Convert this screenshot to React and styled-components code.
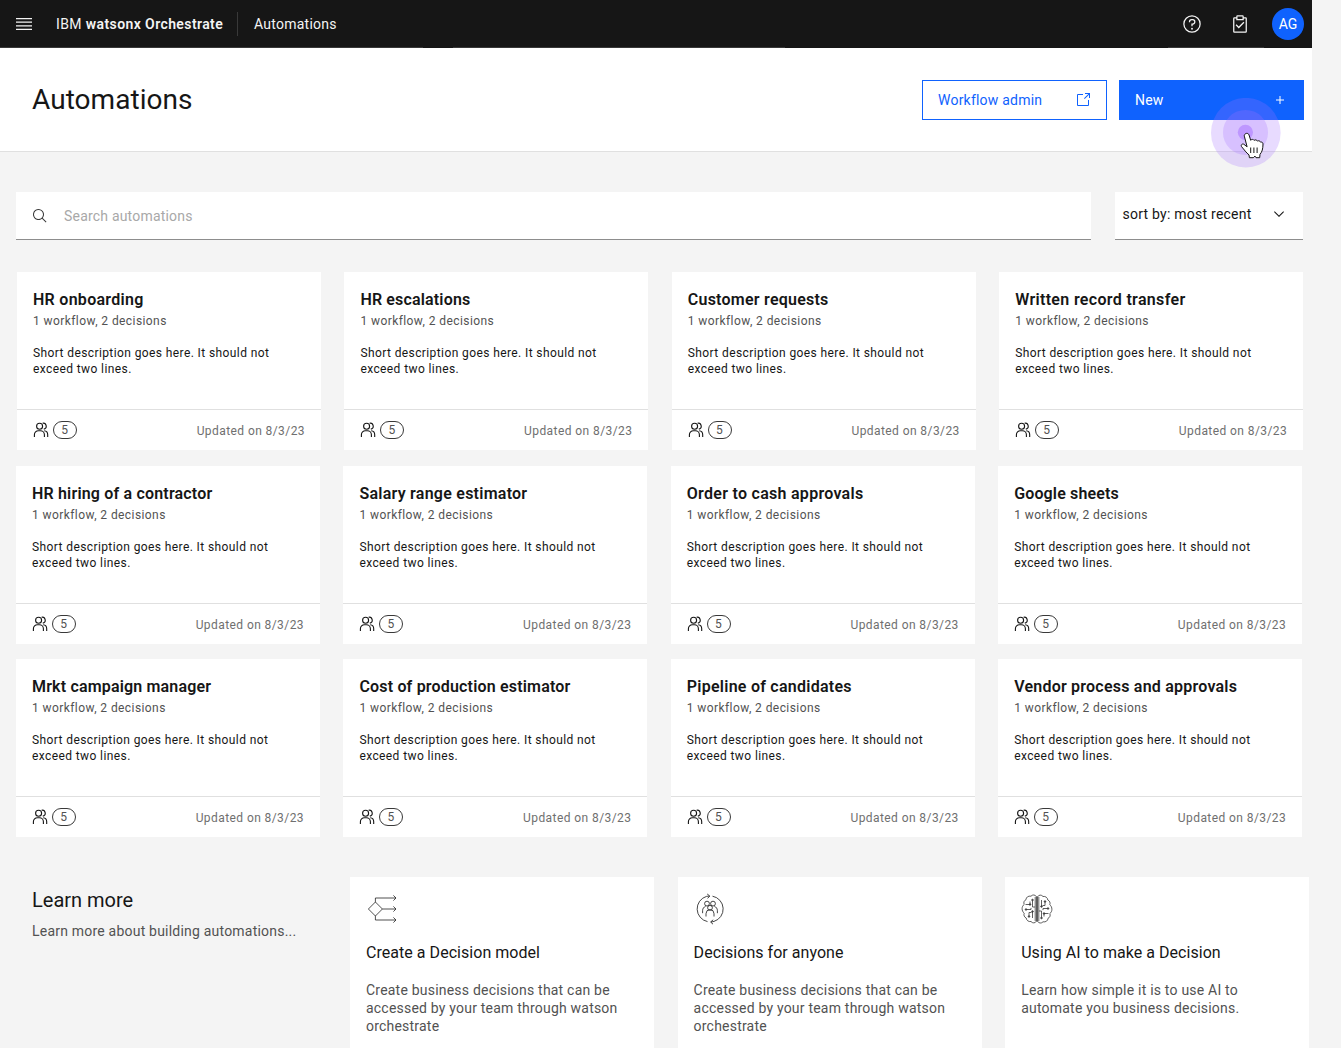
import React from "react";
import styled, { createGlobalStyle } from "styled-components";

const COLOR = {
  black: "#161616",
  blue: "#0f62fe",
  page: "#f4f4f4",
  line: "#e0e0e0",
  text: "#161616",
  gray: "#525252",
  light: "#6f6f6f",
};

const GlobalStyle = createGlobalStyle`
  * {
    box-sizing: border-box;
  }
  body {
    margin: 0;
    background: ${COLOR.page};
    color: ${COLOR.text};
    font-family: Roboto, "Liberation Sans", sans-serif;
    font-size: 14px;
    overflow: hidden;
  }
  h1, h2, h3, p {
    margin: 0;
    font-weight: 400;
  }
  button {
    font: inherit;
    border-radius: 0;
  }
  svg {
    display: block;
    flex: none;
  }
`;

const Page = styled.div`
  height: 1048px;
  overflow: hidden;
`;

const Header = styled.header`
  width: 1312px;
  height: 48px;
  display: flex;
  align-items: center;
  padding: 0 8px 0 14px;
  color: #f4f4f4;
  background-color: ${COLOR.black};
  background-image: linear-gradient(#393939, #393939),
    linear-gradient(#393939, #393939), linear-gradient(#393939, #393939);
  background-repeat: no-repeat;
  background-size: 423px 1px, 332px 1px, 96px 1px;
  background-position: 0 47px, 453px 47px, 1168px 47px;
`;
const Brand = styled.div`
  width: 182px;
  height: 24px;
  margin-left: 22px;
  border-right: 1px solid #393939;
  line-height: 24px;
  white-space: nowrap;
  letter-spacing: 0.4px;
`;
const BrandName = styled.b`
  font-weight: 600;
`;
const Crumb = styled.span`
  margin-left: 16px;
  letter-spacing: 0.25px;
`;
const HeaderActions = styled.div`
  display: flex;
  align-items: center;
  margin-left: auto;
  gap: 28px;
`;
const Avatar = styled.div`
  width: 32px;
  height: 32px;
  margin-left: -6px;
  border-radius: 50%;
  background: ${COLOR.blue};
  color: #fff;
  line-height: 32px;
  text-align: center;
`;

const TitleBar = styled.div`
  position: relative;
  width: 1312px;
  height: 104px;
  display: flex;
  align-items: center;
  padding: 0 8px 0 32px;
  background: #fff;
  border-bottom: 1px solid ${COLOR.line};
`;
const Title = styled.h1`
  flex: 1;
  font-size: 28px;
  line-height: 36px;
  letter-spacing: 0.04px;
`;
const Btn = styled.button`
  width: 185px;
  height: 40px;
  display: flex;
  align-items: center;
  justify-content: space-between;
  padding: 0 15px;
  margin-left: 12px;
  border: 1px solid ${COLOR.blue};
  background: ${({ primary }) => (primary ? COLOR.blue : "#fff")};
  color: ${({ primary }) => (primary ? "#fff" : COLOR.blue)};
  letter-spacing: 0.22px;
`;
const Pointer = styled.svg`
  position: absolute;
  left: 1211px;
  top: 50px;
`;

const Filters = styled.div`
  display: flex;
  width: 1303px;
  padding: 40px 0 0 16px;
  gap: 24px;
`;
const Field = styled.div`
  height: 48px;
  display: flex;
  align-items: center;
  background: #fff;
  border-bottom: 1px solid #8d8d8d;
`;
const Search = styled(Field)`
  flex: 1;
  padding-left: 16px;
  gap: 16px;
  color: #a8a8a8;
  letter-spacing: 0.2px;
`;
const Sort = styled(Field)`
  width: 188.5px;
  justify-content: space-between;
  padding: 0 16px 3px 8px;
  letter-spacing: 0.24px;
`;

const Row = styled.section`
  display: flex;
  gap: 23.4px;
  padding-left: ${({ left }) => left || "16px"};
  margin-top: ${({ top }) => top};
`;
const CardBox = styled.article`
  width: 304px;
  height: 178px;
  flex: none;
  background: #fff;
`;
const CardBody = styled.div`
  height: 138px;
  padding: 17px 16px 0;
  border-bottom: 1px solid ${COLOR.line};
`;
const CardTitle = styled.h3`
  font-size: 16px;
  line-height: 22px;
  font-weight: 600;
  white-space: nowrap;
  letter-spacing: ${({ spacing }) => spacing || 0};
`;
const CardMeta = styled.p`
  margin-top: 2px;
  font-size: 12px;
  line-height: 16px;
  color: ${COLOR.gray};
  letter-spacing: 0.42px;
`;
const CardText = styled.p`
  width: 260px;
  margin-top: 16px;
  font-size: 12px;
  line-height: 16px;
  letter-spacing: 0.4px;
`;
const CardFooter = styled.div`
  height: 40px;
  display: flex;
  align-items: center;
  padding: 0 16px;
  font-size: 12px;
  color: ${COLOR.light};
`;
const Count = styled.span`
  width: 24px;
  height: 18px;
  margin-left: 4px;
  padding-right: 1px;
  border: 1px solid #393939;
  border-radius: 9px;
  color: ${COLOR.gray};
  line-height: 16px;
  text-align: center;
`;
const Updated = styled.span`
  margin-left: auto;
  padding-top: 2px;
  letter-spacing: 0.42px;
`;

const Learn = styled.section`
  display: flex;
  margin-top: 40px;
  padding-left: 32px;
`;
const LearnIntro = styled.div`
  width: 318px;
  padding-top: 10px;
`;
const LearnHeading = styled.h2`
  margin-bottom: 9px;
  font-size: 20px;
  line-height: 26px;
`;
const LearnText = styled.p`
  font-size: 14px;
  line-height: 18px;
  color: ${COLOR.gray};
  letter-spacing: 0.21px;
`;
const LearnCards = styled.div`
  display: flex;
  gap: 23.6px;
`;
const LearnCard = styled.article`
  width: 304px;
  height: 190px;
  padding: 16px 16px 0;
  background: #fff;
`;
const LearnTitle = styled.h3`
  margin: 17px 0;
  font-size: 16px;
  line-height: 22px;
  letter-spacing: 0.04px;
`;

const MenuIcon = () => (
  <svg width="20" height="20" viewBox="0 0 20 20" fill="#f4f4f4">
    <path d="M2 14.8H18V16H2zM2 11.2H18V12.4H2zM2 7.6H18V8.8H2zM2 4H18V5.2H2z" />
  </svg>
);

const Icon = ({ size = 16, color = "currentColor", children }) => (
  <svg width={size} height={size} viewBox="0 0 32 32" fill={color}>
    {children}
  </svg>
);

const HelpIcon = () => (
  <Icon size={20}>
    <path d="M16 2a14 14 0 1 0 14 14A14 14 0 0 0 16 2Zm0 26a12 12 0 1 1 12-12 12 12 0 0 1-12 12Z" />
    <circle cx="16" cy="23.5" r="1.5" />
    <path d="M17 8h-1.5a4.49 4.49 0 0 0-4.5 4.5v.5h2v-.5a2.5 2.5 0 0 1 2.5-2.5H17a2.5 2.5 0 0 1 0 5h-2v4.5h2V17a4.5 4.5 0 0 0 0-9Z" />
  </Icon>
);

const TaskIcon = () => (
  <Icon size={20}>
    <path d="M14 20.18 10.41 16.59 9 18l5 5 9-9-1.41-1.42z" />
    <path d="M25 5h-3V4a2 2 0 0 0-2-2h-8a2 2 0 0 0-2 2v1H7a2 2 0 0 0-2 2v21a2 2 0 0 0 2 2h18a2 2 0 0 0 2-2V7a2 2 0 0 0-2-2ZM12 4h8v4h-8Zm13 24H7V7h3v3h12V7h3Z" />
  </Icon>
);

const LaunchIcon = () => (
  <Icon>
    <path d="M26 28H6a2 2 0 0 1-2-2V6a2 2 0 0 1 2-2h10v2H6v20h20V16h2v10a2 2 0 0 1-2 2Z" />
    <path d="M20 2v2h6.6L18 12.6l1.4 1.4L28 5.4V12h2V2z" />
  </Icon>
);

const AddIcon = () => (
  <Icon>
    <path d="M17 15V8h-2v7H8v2h7v7h2v-7h7v-2z" />
  </Icon>
);

const SearchIcon = () => (
  <Icon color="#393939">
    <path d="m29 27.6-7.55-7.57a11 11 0 1 0-1.42 1.42L27.6 29ZM4 13a9 9 0 1 1 9 9 9 9 0 0 1-9-9Z" />
  </Icon>
);

const ChevronIcon = () => (
  <Icon>
    <path d="M16 22 6 12l1.4-1.4 8.6 8.6 8.6-8.6L26 12z" />
  </Icon>
);

const PeopleIcon = () => (
  <svg width="16" height="16" viewBox="0 0 16 16" fill="none" stroke="#161616" strokeWidth="1.1">
    <circle cx="6.6" cy="4.2" r="3" />
    <path d="M1.4 15v-2.2a4 4 0 0 1 4-4h2a4 4 0 0 1 4 4V15" />
    <path d="M9.6 1.2a3 3 0 0 1 1.2 5.9M11.2 8.8a4 4 0 0 1 3.5 4V15" />
  </svg>
);

const DecisionIcon = () => (
  <svg width="32" height="32" viewBox="0 0 32 32" fill="none" stroke="#161616" strokeWidth="0.75">
    <path d="m2.4 16 7-7 7 7-7 7zM9.4 9V5h20.4M16.4 16h13.4M9.4 23v4h20.4" />
    <path d="m27.4 2.4 2.6 2.6-2.6 2.6M27.4 13.4l2.6 2.6-2.6 2.6M27.4 24.4l2.6 2.6-2.6 2.6" />
  </svg>
);

const TeamIcon = () => (
  <svg width="32" height="32" viewBox="0 0 32 32" fill="none" stroke="#161616" strokeWidth="0.8">
    <path d="M13.5 28.6A13 13 0 0 1 12.5 3.4l2.8-.4M18.5 3.2A13 13 0 0 1 20 28.4l-3 .7" />
    <path d="m13.2 1 2.6 2-2.2 2.4M19.2 26.8 16.6 29l2.4 2.2" />
    <circle cx="13" cy="10.6" r="2.4" />
    <circle cx="19" cy="10.6" r="2.4" />
    <circle cx="16" cy="14.8" r="2.4" />
    <path d="M12 23.5v-2.8a4 4 0 0 1 8 0v2.8M8.6 20.2v-2.6c0-2 1.2-3.7 3-4.2M23.4 20.2v-2.6c0-2-1.2-3.7-3-4.2" />
  </svg>
);

const BrainHalf = () => (
  <>
    <path d="M15.4 3.6C14.4 1.6 11.3 1.4 10 3.2 7.3 2.6 5 4.3 5 6.7 3 7.5 2.3 9.7 3.2 11.4.4 13.4.4 18 3.2 20.2c-.8 2 .1 4 2 4.8.2 2.4 2.4 4 4.8 3.5 1.4 1.9 4.3 1.8 5.4-.2z" />
    <path d="M14 4v24" strokeOpacity="0.6" />
    <path d="M11.5 7.5v6.5h2.5M4.5 11.5H9V8.5M5.5 16.5H10v-1.6M8 23v-3.5h2.5M11.5 25v-6.5" />
    <g fill="#393939">
      <circle cx="11.5" cy="7" r=".8" />
      <circle cx="9" cy="11.5" r=".8" />
      <circle cx="5" cy="16.5" r=".8" />
      <circle cx="8" cy="23.5" r=".8" />
      <circle cx="11.5" cy="18.5" r=".8" />
    </g>
  </>
);

const BrainIcon = () => (
  <svg width="32" height="32" viewBox="0 0 32 32" fill="none" stroke="#393939" strokeWidth="0.8">
    <path d="M16 3.6v24.8" stroke="#8d8d8d" strokeOpacity="0.6" strokeWidth="4" />
    <BrainHalf />
    <g transform="rotate(180 16 16)">
      <BrainHalf />
    </g>
  </svg>
);

const ClickPointer = () => (
  <Pointer width="70" height="70" viewBox="0 0 70 70">
    <g fill="#a56eff">
      <circle cx="34.8" cy="34.7" r="34.8" fillOpacity="0.25" />
      <circle cx="34.5" cy="34.4" r="22.5" fillOpacity="0.25" />
      <circle cx="34.4" cy="34.3" r="7.6" fillOpacity="0.5" />
    </g>
    <g transform="translate(-1 0)">
      <path
        d="M36.3 35.4c1.2-.3 2.3.4 2.7 1.5l1.7 5.4c.7-1.2 2.8-1.2 3.4.1.8-.9 2.8-.7 3.3.7 1-.8 2.8-.2 3.2 1.1 1-.5 2.4.2 2.4 1.7 0 4.9-.9 8.1-3 10.4l-.3 3.4h-3.7l-1-1.6-1.7 1.6h-3.9l-.4-2.8c-2.8-2.2-4.8-5.2-7.3-8.1-1.3-1.6.5-3.5 2.2-2.5l3.2 2.5-2.8-10.7c-.3-1.2.8-2.4 2-2.7z"
        fill="#fff"
        stroke="#161616"
        strokeLinejoin="round"
      />
      <path d="M40.7 49.5v5.5M43.9 49.5v5.5M47.1 49.5v5.5" stroke="#161616" />
    </g>
  </Pointer>
);

const rows = [
  {
    top: "32px",
    left: "17px",
    cards: [
      { title: "HR onboarding", spacing: "0.28px" },
      { title: "HR escalations", spacing: "0.16px" },
      { title: "Customer requests", spacing: "0.24px" },
      { title: "Written record transfer", spacing: "0.33px" },
    ],
  },
  {
    top: "16px",
    cards: [
      { title: "HR hiring of a contractor", spacing: "0.18px" },
      { title: "Salary range estimator", spacing: "0.25px" },
      { title: "Order to cash approvals", spacing: "0.28px" },
      { title: "Google sheets", spacing: "0.14px" },
    ],
  },
  {
    top: "15px",
    cards: [
      { title: "Mrkt campaign manager", spacing: "0.17px" },
      { title: "Cost of production estimator", spacing: "0.18px" },
      { title: "Pipeline of candidates", spacing: "0.25px" },
      { title: "Vendor process and approvals", spacing: "0.22px" },
    ],
  },
];

const lessons = [
  {
    icon: <DecisionIcon />,
    title: "Create a Decision model",
    text: "Create business decisions that can be accessed by your team through watson orchestrate",
  },
  {
    icon: <TeamIcon />,
    title: "Decisions for anyone",
    text: "Create business decisions that can be accessed by your team through watson orchestrate",
  },
  {
    icon: <BrainIcon />,
    title: "Using AI to make a Decision",
    text: "Learn how simple it is to use AI to automate you business decisions.",
  },
];

function Card({ title, spacing }) {
  return (
    <CardBox>
      <CardBody>
        <CardTitle spacing={spacing}>{title}</CardTitle>
        <CardMeta>1 workflow, 2 decisions</CardMeta>
        <CardText>Short description goes here. It should not exceed two lines.</CardText>
      </CardBody>
      <CardFooter>
        <PeopleIcon />
        <Count>5</Count>
        <Updated>Updated on 8/3/23</Updated>
      </CardFooter>
    </CardBox>
  );
}

export default function App() {
  return (
    <Page>
      <GlobalStyle />
      <Header>
        <MenuIcon />
        <Brand>
          IBM <BrandName>watsonx Orchestrate</BrandName>
        </Brand>
        <Crumb>Automations</Crumb>
        <HeaderActions>
          <HelpIcon />
          <TaskIcon />
          <Avatar>AG</Avatar>
        </HeaderActions>
      </Header>
      <TitleBar>
        <Title>Automations</Title>
        <Btn>
          Workflow admin
          <LaunchIcon />
        </Btn>
        <Btn primary="true">
          New
          <AddIcon />
        </Btn>
        <ClickPointer />
      </TitleBar>
      <Filters>
        <Search>
          <SearchIcon />
          Search automations
        </Search>
        <Sort>
          sort by: most recent
          <ChevronIcon />
        </Sort>
      </Filters>
      {rows.map((row) => (
        <Row key={row.top} top={row.top} left={row.left}>
          {row.cards.map((card) => (
            <Card key={card.title} {...card} />
          ))}
        </Row>
      ))}
      <Learn>
        <LearnIntro>
          <LearnHeading>Learn more</LearnHeading>
          <LearnText>Learn more about building automations...</LearnText>
        </LearnIntro>
        <LearnCards>
          {lessons.map((item) => (
            <LearnCard key={item.title}>
              {item.icon}
              <LearnTitle>{item.title}</LearnTitle>
              <LearnText>{item.text}</LearnText>
            </LearnCard>
          ))}
        </LearnCards>
      </Learn>
    </Page>
  );
}
